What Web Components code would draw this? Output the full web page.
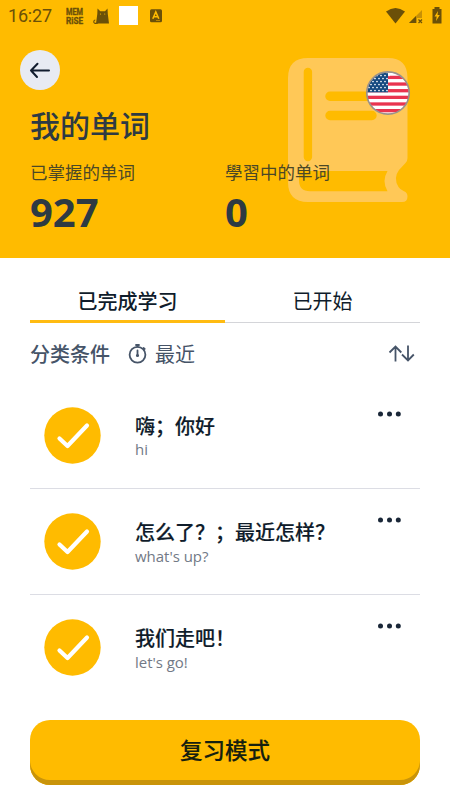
<!DOCTYPE html>
<html lang="zh-CN">
<head>
<meta charset="utf-8">
<title>我的单词</title>
<style>
html,body{margin:0;height:100%;background:#fff}
body{font-family:"Open Sans","Noto Sans CJK SC",sans-serif;color:#0f1c2b;overflow:hidden}
</style>
</head>
<body>
<words-page></words-page>
<script>
const define = (name, html, setup) => customElements.define(name, class extends HTMLElement {
  constructor() {
    super();
    const t = document.createElement('template');
    t.innerHTML = html;
    this.attachShadow({mode: 'open'}).append(t.content.cloneNode(true));
  }
  connectedCallback() { if (setup) setup(this, this.shadowRoot); }
});

define('status-bar', `
<style>
:host{display:flex;align-items:center;height:31px;padding:0 8px;box-sizing:border-box;color:#6b5008;font:18px/31px Roboto,sans-serif}
.time{width:58px;letter-spacing:-.2px}
svg{display:block;flex:none;overflow:visible}
.gap{flex:1}
.sq{width:19px;height:19px;background:#fff;margin-left:9px}
</style>
<span class="time">16:27</span>
<svg width="18" height="18" viewBox="0 0 18 18" fill="currentColor" stroke="currentColor" stroke-width=".35" font-family="Roboto,sans-serif" font-weight="700" font-size="8.500"><text x="0" y="7.500" textLength="17" lengthAdjust="spacingAndGlyphs">MEM</text><text x="0" y="16.800" textLength="17" lengthAdjust="spacingAndGlyphs">RiSE</text></svg>
<svg style="margin-left:9px" width="17" height="18" viewBox="0 0 17 18"><path fill="currentColor" d="M3 16.500 4.300 7 4.500 1.500 7.300 4.300H12L14.500 1.500 14.800 7 16 16.500Z"/><path d="M5 16C2 17 .5 16 .8 14.300Q1 13 2.300 13" fill="none" stroke="currentColor" stroke-width="1.100"/><circle cx="7.500" cy="7" r=".6" fill="#fb0"/><circle cx="11.700" cy="7" r=".6" fill="#fb0"/></svg>
<i class="sq"></i>
<svg style="margin-left:12px" width="12" height="14" viewBox="0 0 12 14"><rect width="12" height="13" y=".3" rx="1.500" fill="currentColor"/><path d="M2.800 9.800 5.800 3 8.800 9.800M4 7.700H7.600" fill="none" stroke="#fb0" stroke-width="1.600"/><path d="M6 11.500H10" stroke="#b98500"/></svg>
<span class="gap"></span>
<svg width="57" height="18" viewBox="385 6 57 18"><path fill="currentColor" d="M386 10.500Q395.500 3.500 405 10.500L395.500 22.500Z"/><path fill="#c79005" d="M422 9V17H417V22H409Z"/><path fill="currentColor" d="M416 15V22H409Z"/><path d="M418.500 18.500 422 22M422 18.500 418.500 22" stroke="currentColor" stroke-width="1.200"/><path fill="currentColor" d="M434.500 6H439.500V8H441.500V22.500H432.500V8H434.500Z"/><path fill="#fb0" d="M438 10 434.500 15.500H436.700L436 20 439.800 14H437.500Z"/></svg>`);

define('back-button', `
<style>:host{display:grid;place-items:center;width:40px;height:40px;border-radius:50%;background:#e8ebf3}</style>
<svg width="22" height="20" viewBox="0 0 22 20" fill="none" stroke="#111c2e" stroke-width="2" stroke-linecap="round" stroke-linejoin="round"><path d="M20 10.500H2M8.500 3.800 2 10.500 8 17"/></svg>`);

define('language-badge', `
<style>:host{display:block;width:120px;height:145px;position:relative}
.flag{position:absolute;left:76.500px;top:12px}svg{display:block}</style>
<svg width="120" height="145" viewBox="288 58 120 145"><path fill="#ffc857" fill-rule="evenodd" d="M308 58H388Q407.500 58 407.500 78V158Q407.500 161 405.500 163L399 170Q393 178 398.500 187Q400 189.500 404 191.300Q407.500 192.500 407.500 196.500Q407.500 202 402 202H308Q288 202 288 182V78Q288 58 308 58ZM303.700 72V157A4.200 4.200 0 0 0 312.100 157V72A4.200 4.200 0 0 0 303.700 72ZM299 171V180Q299 191.300 310 191.300H387.500Q381.500 181 387.500 171ZM330 91.500A4.500 4.500 0 0 0 330 101H372A4.500 4.500 0 0 0 372 91.500ZM330 110.800A4.500 4.500 0 0 0 330 120.200H372A4.500 4.500 0 0 0 372 110.800Z"/></svg>
<svg class="flag" width="46" height="46" viewBox="-23 -23 46 46"></svg>`, (el, root) => {
  let s = '<clipPath id="c"><circle r="21"/></clipPath><g clip-path="url(#c)"><rect x="-23" y="-23" width="46" height="46" fill="#fff"/>';
  for (let i = 0; i < 7; i++) s += `<rect x="-23" y="${(-23.900 + i * 6.650).toFixed(2)}" width="46" height="3.300" fill="#e9344f"/>`;
  s += '<rect x="-23" y="-23" width="23" height="22.300" fill="#164a80"/>';
  for (let r = 0; r < 7; r++) for (let c = 0; c < 6; c++)
    s += `<circle cx="${-21 + c * 4 + (r % 2) * 2}" cy="${-20.500 + r * 3}" r=".85" fill="#fff"/>`;
  s += '</g><circle r="21.200" fill="none" stroke="#98918c" stroke-width="1.700"/>';
  root.querySelector('.flag').innerHTML = s;
});

define('word-stat', `
<style>:host{display:block;flex:1;color:#2d3a43}
.label{font-size:17.500px;line-height:26px;color:#4b4827}
.num{font-size:40px;line-height:44px;font-weight:700;margin-top:5px}</style>
<div class="label"><slot name="label"></slot></div><div class="num"><slot></slot></div>`);

define('page-header', `
<style>
:host{display:block;height:258px;background:#fb0;position:relative}
back-button{margin:19px 0 0 20px}
h1{margin:16px 0 0 30px;font-size:30px;line-height:40px;font-weight:500;color:#2d3a43}
.stats{display:flex;margin:13px 30px 0;position:relative}
language-badge{position:absolute;left:288px;top:58px}
</style>
<status-bar></status-bar>
<language-badge></language-badge>
<back-button></back-button>
<h1>我的单词</h1>
<div class="stats"><word-stat><span slot="label">已掌握的单词</span>927</word-stat><word-stat><span slot="label">學習中的单词</span>0</word-stat></div>`);

define('tab-item', `
<style>:host{display:block;flex:1;height:65px;box-sizing:border-box;text-align:center;font-size:20px;line-height:28px;padding-top:30px;box-shadow:inset 0 -1px #d4d5d9}
:host([active]){font-weight:500;box-shadow:inset 0 -3px #fb1}</style><slot></slot>`);

define('sort-bar', `
<style>:host{display:flex;align-items:center;height:60px;padding-top:2px;box-sizing:border-box;color:#465468;font-size:20px;line-height:28px}
b,span{padding-top:2px}
b{font-weight:500;margin-right:18px}
.gap{flex:1}svg{display:block}span{margin-left:7px}</style>
<b>分类条件</b>
<svg width="20" height="20" viewBox="0 0 20 20" fill="none" stroke="currentColor" stroke-width="1.800" stroke-linecap="round"><circle cx="9.500" cy="10.700" r="7.900"/><path d="M9.500 6.500V11M8 1H11M9.500 1V2.500M15.500 4 16.700 5"/><circle cx="9.500" cy="11.500" r=".7"/></svg>
<span>最近</span><i class="gap"></i>
<svg style="margin-right:5px" width="27" height="18" viewBox="0 0 27 18" fill="none" stroke="currentColor" stroke-width="1.800"><path d="M7.500 16.500V1.500M1.500 7.500 7.500 1.500 13.300 7.500M20 .5V15.500M14 9.500 20 15.500 25.800 9.500"/></svg>`);

define('word-row', `
<style>:host{display:flex;height:106.200px;box-sizing:border-box;border-bottom:1.500px solid #dcdde4;padding-left:14px}
:host(:last-of-type){border:0}
.check{margin-top:24px;width:57px;height:57px;flex:none}
.text{margin-left:34px;padding-top:28.500px;flex:1}
.word{font-size:20px;line-height:30px;font-weight:500;-webkit-text-stroke:.15px;white-space:nowrap}
.mean{font-size:15px;line-height:20px;color:#727986;margin-top:-2.200px;letter-spacing:-.03px}
.dots{margin:28px 18px 0 0;width:25px;height:6px}</style>
<svg class="check" viewBox="0 0 57 57"><circle cx="28.500" cy="28.500" r="28.200" fill="#fb0"/><path d="M15.500 31.500 23.500 39 43 18.500" fill="none" stroke="#fff" stroke-width="4.200" stroke-linecap="round" stroke-linejoin="round"/></svg>
<div class="text"><div class="word"><slot></slot></div><div class="mean"><slot name="meaning"></slot></div></div>
<svg class="dots" viewBox="0 0 25 6" fill="#1a2738"><circle cx="3.500" cy="3" r="2.500"/><circle cx="12.500" cy="3" r="2.500"/><circle cx="21.300" cy="3" r="2.500"/></svg>`);

define('review-button', `
<style>:host{display:block;height:65px;box-sizing:border-box;border-radius:20px;background:#fb0;box-shadow:inset 0 -5px #c9940a;text-align:center;font-size:22.500px;line-height:62px;font-weight:500;-webkit-text-stroke:.15px;color:#15200f}</style><slot></slot>`);

define('words-page', `
<style>
:host{display:flex;flex-direction:column;width:450px;height:800px;background:#fff}
main{padding:0 30px;flex:1;display:flex;flex-direction:column}
.tabs{display:flex}
.list{flex:1}
review-button{margin-bottom:15px}
</style>
<page-header></page-header>
<main>
<div class="tabs"><tab-item active>已完成学习</tab-item><tab-item>已开始</tab-item></div>
<sort-bar></sort-bar>
<div class="list">
<word-row>嗨；你好<span slot="meaning">hi</span></word-row>
<word-row>怎么了？；最近怎样？<span slot="meaning">what's up?</span></word-row>
<word-row>我们走吧！<span slot="meaning">let's go!</span></word-row>
</div>
<review-button>复习模式</review-button>
</main>`);
</script>
</body>
</html>
